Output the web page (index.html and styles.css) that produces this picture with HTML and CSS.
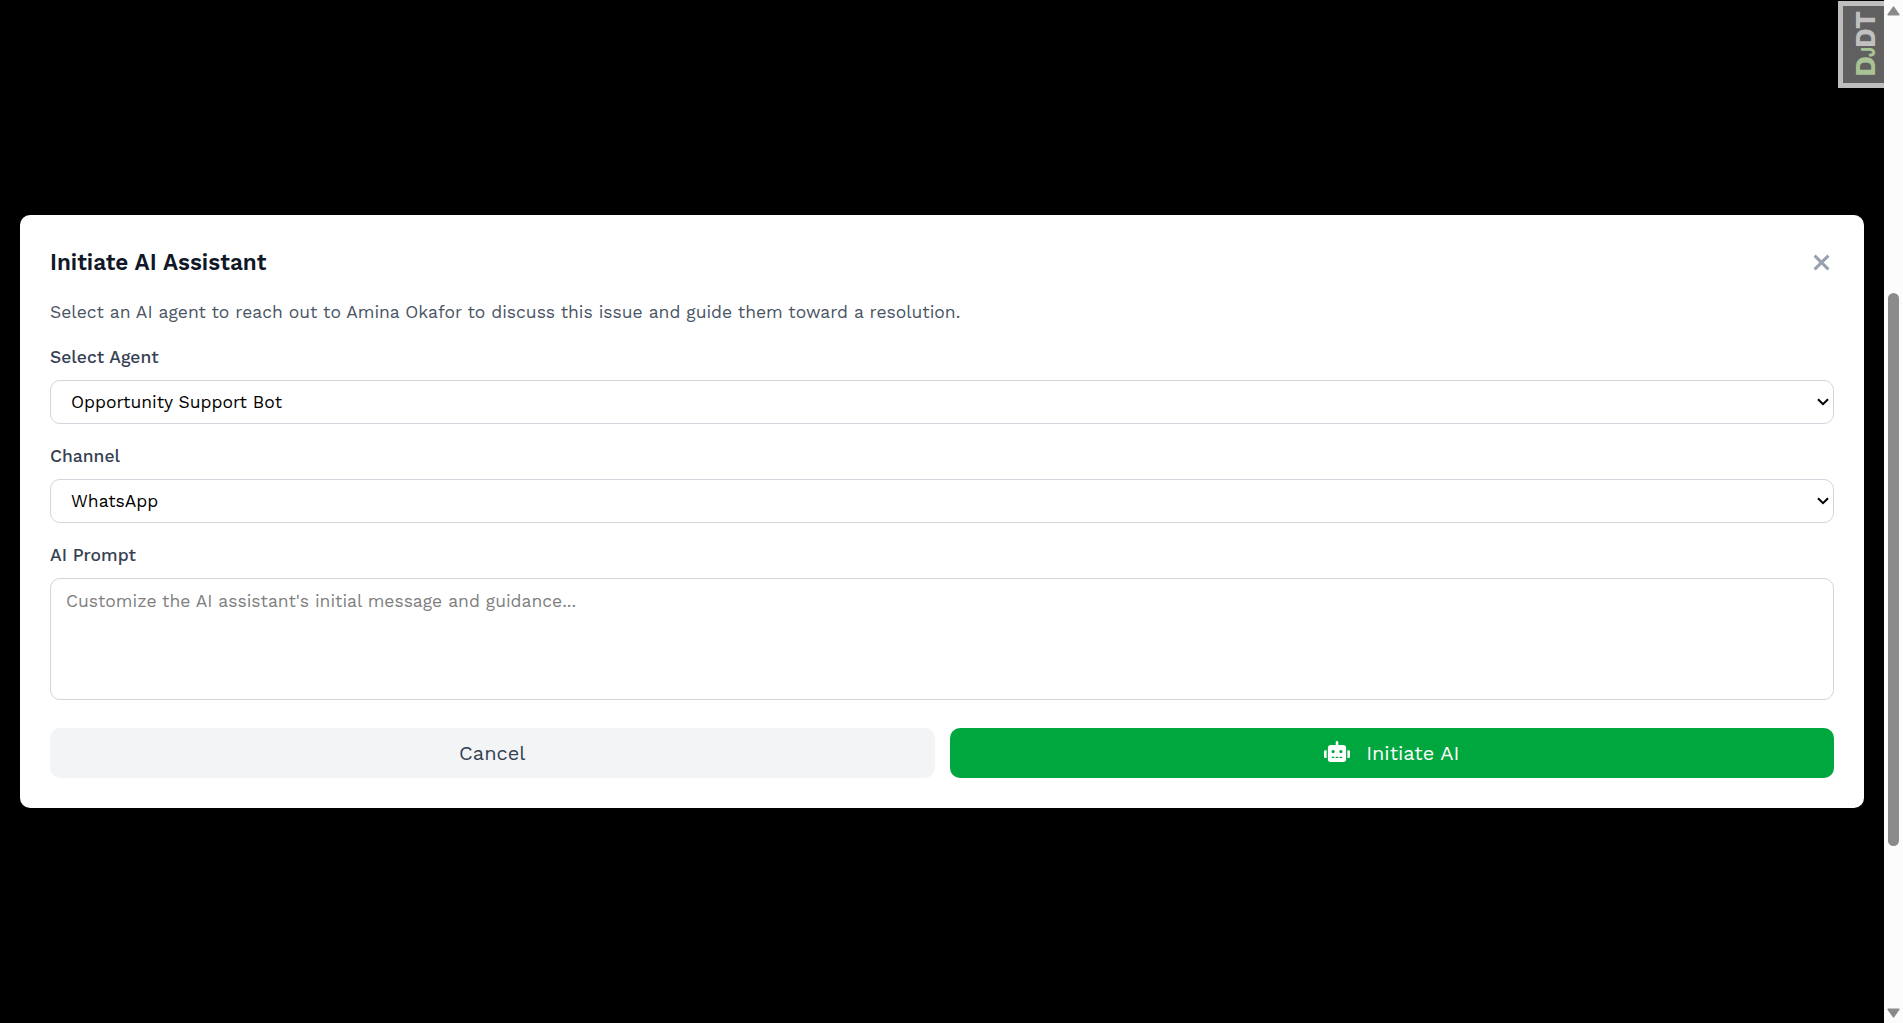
FILE: index.html
```html
<!DOCTYPE html>
<html lang="en">
<head>
<meta charset="utf-8">
<title>Initiate AI Assistant</title>
<link rel="stylesheet" href="styles.css">
</head>
<body>
<main class="overlay">
  <section class="modal" role="dialog" aria-labelledby="modal-title">
    <header class="modal-header">
      <h3 class="modal-title" id="modal-title">Initiate AI Assistant</h3>
      <button class="close" type="button" aria-label="Close">
        <svg viewBox="0 0 16 16"><path d="M1.5 1.5 14.5 14.5M14.5 1.5 1.5 14.5"/></svg>
      </button>
    </header>
    <p class="intro">Select an AI agent to reach out to Amina Okafor to discuss this issue and guide them toward a resolution.</p>
    <label class="label" for="agent">Select Agent</label>
    <select class="field select" id="agent"><option>Opportunity Support Bot</option></select>
    <label class="label" for="channel">Channel</label>
    <select class="field select" id="channel"><option>WhatsApp</option></select>
    <label class="label" for="prompt">AI Prompt</label>
    <textarea class="field prompt" id="prompt" placeholder="Customize the AI assistant's initial message and guidance..."></textarea>
    <div class="actions">
      <button class="btn cancel" type="button">Cancel</button>
      <button class="btn initiate" type="button">
        <svg class="robot" viewBox="0 0 640 512"><path d="M32 224H64V416H32A32 32 0 0 1 0 384V256A32 32 0 0 1 32 224ZM544 176V448a64 64 0 0 1-64 64H160a64 64 0 0 1-64-64V176a80 80 0 0 1 80-80H288V32a32 32 0 0 1 64 0V96H464A80 80 0 0 1 544 176ZM264 256a40 40 0 1 0-40 40A40 40 0 0 0 264 256Zm-8 128H192v32h64Zm96 0H288v32h64ZM456 256a40 40 0 1 0-40 40A40 40 0 0 0 456 256Zm-8 128H384v32h64ZM640 256V384a32 32 0 0 1-32 32H576V224h32A32 32 0 0 1 640 256Z"/></svg>
        <span>Initiate AI</span>
      </button>
    </div>
  </section>
  <div class="debug-handle">
    <svg viewBox="0 0 41 77"><g transform="translate(32 69) rotate(-90)"><text class="dj" x="-2" y="0" textLength="21" lengthAdjust="spacingAndGlyphs">D</text><text class="dj small" x="18" y="0" textLength="10" lengthAdjust="spacingAndGlyphs">J</text><text x="27" y="0" textLength="37" lengthAdjust="spacingAndGlyphs">DT</text></g></svg>
  </div>
</main>
<aside class="scrollbar">
  <svg class="arrow" viewBox="0 0 13 10"><path d="M6.5 1.2 11.8 8.8H1.2Z"/></svg>
  <div class="thumb"></div>
  <svg class="arrow down" viewBox="0 0 13 10"><path d="M6.5 8.8 11.8 1.2H1.2Z"/></svg>
</aside>
</body>
</html>
```
FILE: styles.css
```css
* { box-sizing: border-box; }
body {
  margin: 0;
  height: 1023px;
  display: flex;
  overflow: hidden;
  background: #000;
  font-family: "Work Sans", Inter, sans-serif;
  font-size: 20px;
}
button, select, textarea { font: inherit; }
.overlay {
  position: relative;
  flex: 1;
  display: flex;
  align-items: center;
  padding: 0 20px;
}
.modal {
  width: 100%;
  padding: 30px;
  border-radius: 10px;
  background: #fff;
}
.modal-header {
  display: flex;
  align-items: center;
  justify-content: space-between;
  height: 35px;
  margin-bottom: 20px;
}
.modal-title {
  margin: 0;
  font-size: 22.5px;
  font-weight: 600;
  line-height: 35px;
  color: #101828;
}
.close {
  display: flex;
  padding: 0 4px;
  border: 0;
  background: none;
}
.close svg {
  width: 17px;
  height: 17px;
  fill: none;
  stroke: #99a1af;
  stroke-width: 2.8;
}
.intro {
  margin: 0 0 20px;
  font-size: 17.5px;
  line-height: 25px;
  color: #4a5565;
}
.label {
  display: block;
  margin-bottom: 10px;
  font-size: 17.5px;
  font-weight: 500;
  line-height: 25px;
  color: #364153;
}
.field {
  display: block;
  width: 100%;
  border: 1px solid #d1d5dc;
  border-radius: 10px;
  background: #fff;
  font-size: 17.5px;
  color: #000;
}
.select {
  height: 44px;
  margin-bottom: 20px;
  padding: 0 20px;
  appearance: none;
  background: #fff url("data:image/svg+xml,%3Csvg xmlns='http://www.w3.org/2000/svg' viewBox='0 0 12 8'%3E%3Cpath d='M1 1.2 6 6.2 11 1.2' fill='none' stroke='black' stroke-width='2'/%3E%3C/svg%3E") no-repeat right 4px center / 12px 8px;
}
.prompt {
  height: 122px;
  padding: 10px 15px;
  line-height: 25px;
  resize: none;
}
.prompt::placeholder { color: #808080; }
.actions {
  display: flex;
  gap: 15px;
  margin-top: 28px;
}
.btn {
  flex: 1;
  display: flex;
  align-items: center;
  justify-content: center;
  height: 50px;
  padding: 0;
  border: 0;
  border-radius: 10px;
}
.cancel { background: #f3f4f6; color: #364153; }
.initiate { gap: 16px; background: #00a63e; color: #fff; }
.robot { width: 26px; height: 21px; margin-top: -3px; fill: #fff; }
.debug-handle {
  position: absolute;
  top: 1px;
  right: 0;
  width: 46px;
  height: 87px;
  border: 5px solid #bebebe;
  border-right: 0;
  background: #606060;
}
.debug-handle svg { display: block; width: 41px; height: 77px; }
.debug-handle text {
  font: 700 30px "Work Sans", "Open Sans", sans-serif;
  fill: #c0c0c0;
}
.debug-handle .dj { fill: #a9c394; }
.debug-handle .small { font-size: 22px; }
.scrollbar {
  display: flex;
  flex-direction: column;
  align-items: center;
  width: 19px;
  padding: 6px 0 5px;
  background: #fcfcfc;
}
.arrow {
  width: 13px;
  height: 10px;
  fill: #8b8b8b;
  stroke: #8b8b8b;
  stroke-width: 1.6;
  stroke-linejoin: round;
}
.thumb {
  width: 11px;
  height: 553px;
  margin-top: 277px;
  border-radius: 6px;
  background: #8b8b8b;
}
.down { margin-top: auto; }
```
